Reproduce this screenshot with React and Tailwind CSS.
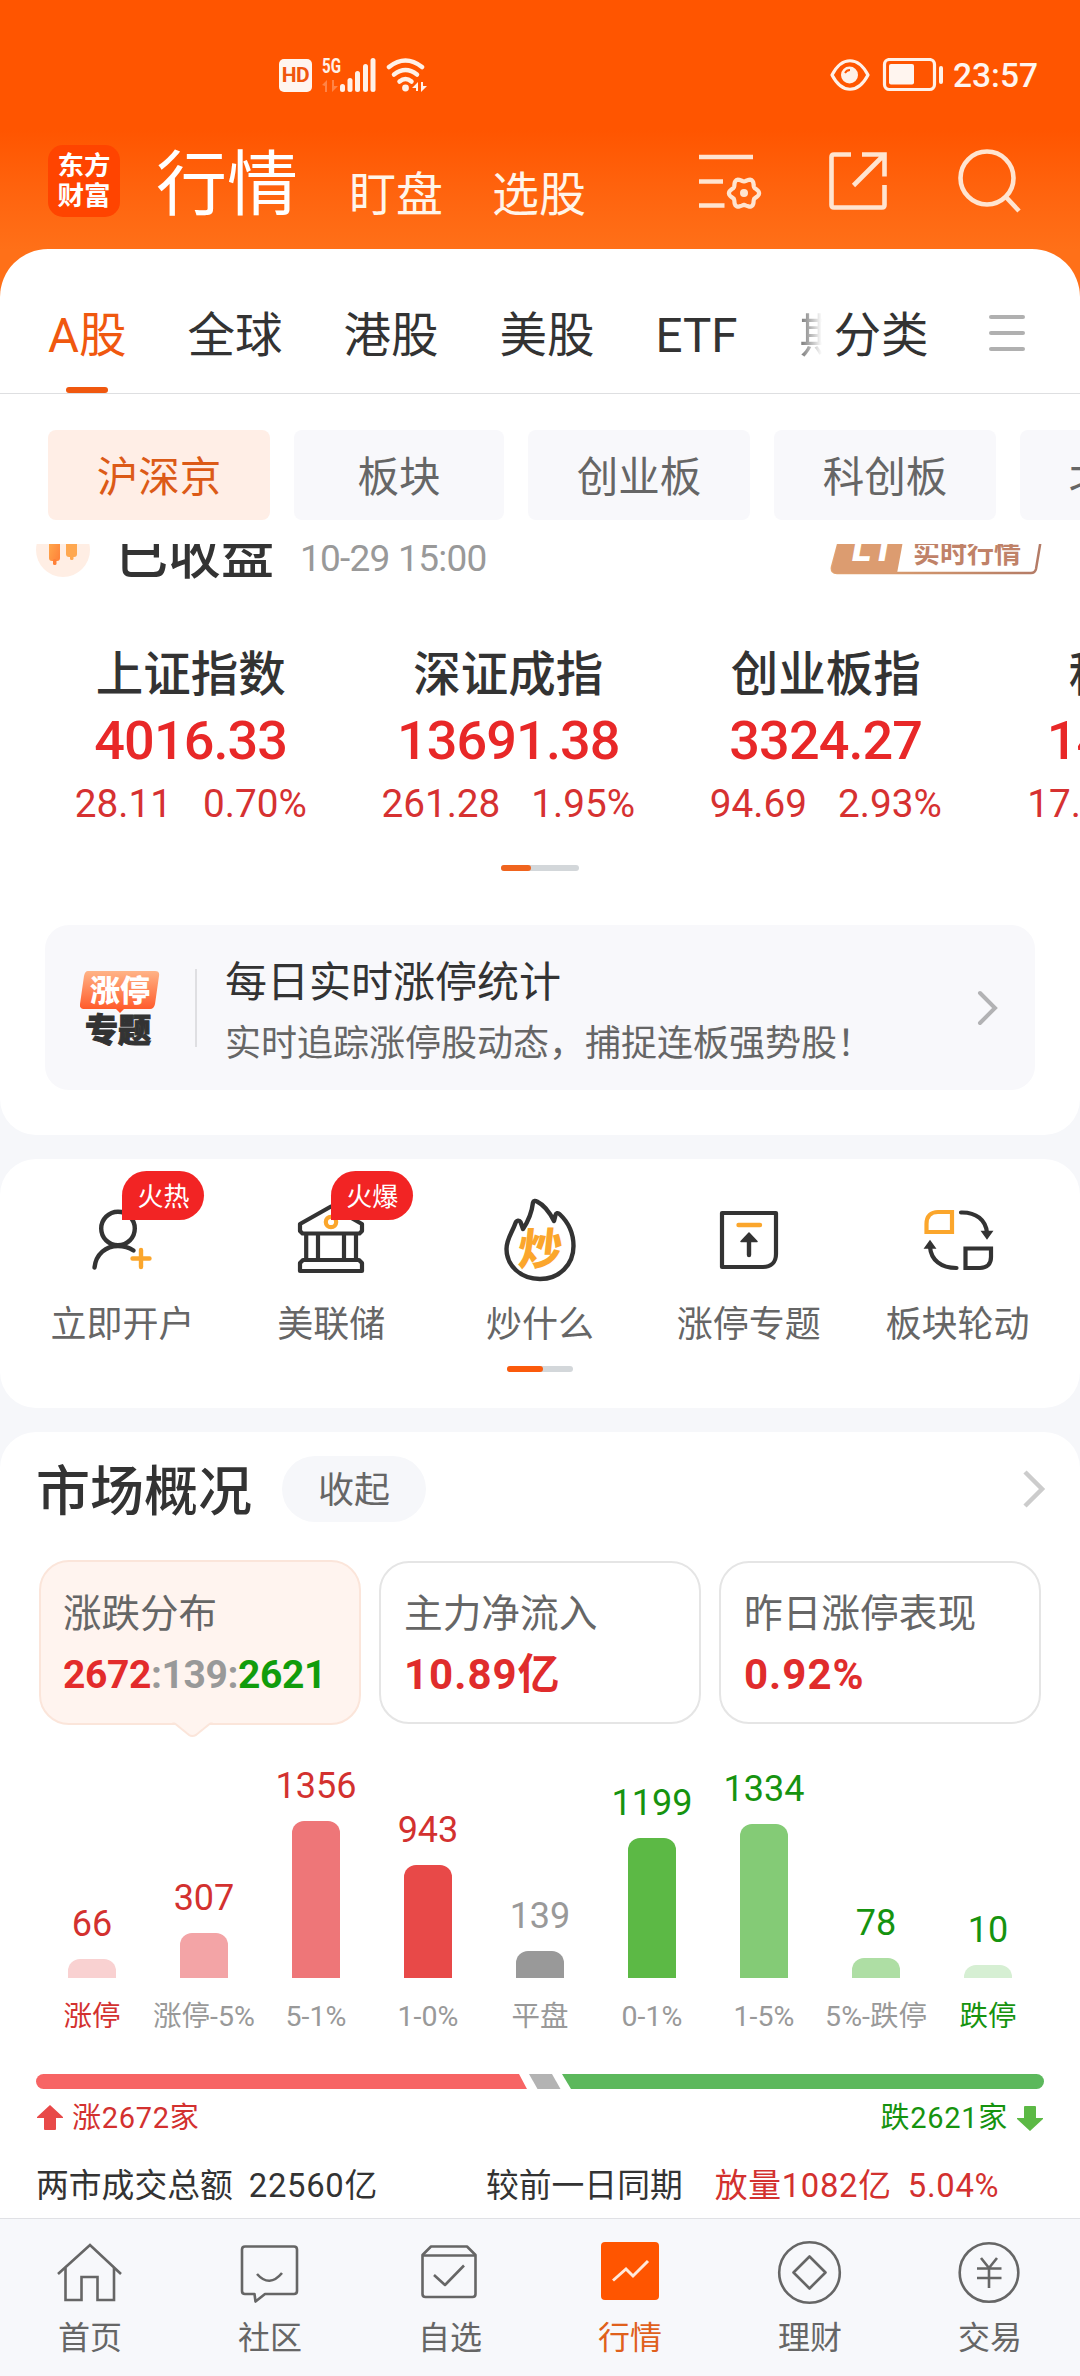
import clsx from 'clsx';

const quickLinks = [
    { name: '立即开户', badge: '火热', icon: UserPlusIcon },
    { name: '美联储', badge: '火爆', icon: BankIcon },
    { name: '炒什么', icon: FlameIcon },
    { name: '涨停专题', icon: LimitUpIcon },
    { name: '板块轮动', icon: RotateIcon },
];

const indices = [
    { name: '上证指数', value: '4016.33', change: '28.11', percent: '0.70%' },
    { name: '深证成指', value: '13691.38', change: '261.28', percent: '1.95%' },
    { name: '创业板指', value: '3324.27', change: '94.69', percent: '2.93%' },
    { name: '科创50', value: '1490.06', change: '17.85', percent: '1.22%' },
];

const bars = [
    { label: '涨停', value: 66, height: 19, bar: 'bg-[#f9d1d1]', text: 'text-[#d3312f]', labelText: 'text-[#d3312f]' },
    { label: '涨停-5%', value: 307, height: 45, bar: 'bg-[#f3a4a6]', text: 'text-[#d3312f]', labelText: 'text-[#999999]' },
    { label: '5-1%', value: 1356, height: 157, bar: 'bg-[#ee7678]', text: 'text-[#d3312f]', labelText: 'text-[#999999]' },
    { label: '1-0%', value: 943, height: 113, bar: 'bg-[#e84948]', text: 'text-[#d3312f]', labelText: 'text-[#999999]' },
    { label: '平盘', value: 139, height: 27, bar: 'bg-[#999999]', text: 'text-[#999999]', labelText: 'text-[#999999]' },
    { label: '0-1%', value: 1199, height: 140, bar: 'bg-[#5cb945]', text: 'text-[#16930f]', labelText: 'text-[#999999]' },
    { label: '1-5%', value: 1334, height: 154, bar: 'bg-[#84cb76]', text: 'text-[#16930f]', labelText: 'text-[#999999]' },
    { label: '5%-跌停', value: 78, height: 20, bar: 'bg-[#aedea4]', text: 'text-[#16930f]', labelText: 'text-[#999999]' },
    { label: '跌停', value: 10, height: 13, bar: 'bg-[#d6efd3]', text: 'text-[#16930f]', labelText: 'text-[#16930f]' },
];

const navItems = [
    { name: '首页', icon: HomeIcon },
    { name: '社区', icon: ChatIcon },
    { name: '自选', icon: BoxIcon },
    { name: '行情', icon: TrendIcon, active: true },
    { name: '理财', icon: DiamondIcon },
    { name: '交易', icon: YuanIcon },
];

// Six rounded teeth around (744, 193)
const gearPoints = Array.from({ length: 72 }, (_, i) => {
    const a = (i * Math.PI) / 36;
    const r = 13.4 + 1.7 * Math.cos(6 * a);
    return `${(744 + r * Math.cos(a)).toFixed(1)},${(193.2 + r * Math.sin(a)).toFixed(1)}`;
}).join(' ');

function UserPlusIcon() {
    return (
        <svg width="84" height="84" viewBox="80 1198 84 84" fill="none" strokeWidth="4.4" strokeLinecap="round">
            <circle cx="118" cy="1228.500" r="16.800" stroke="#333" />
            <path d="M94.500 1267.500C96 1254 106 1246 118 1246C124 1246 129 1247.500 133.500 1250.500" stroke="#333" />
            <path d="M132.500 1258.500H149.500M141 1250V1267" stroke="#fba62c" />
        </svg>
    );
}

function BankIcon() {
    return (
        <svg width="84" height="84" viewBox="289 1198 84 84" fill="none" stroke="#333" strokeWidth="4.2" strokeLinejoin="round">
            <path d="M300 1224L331 1206.500L362 1224V1231L359.500 1233.500H302.500L300 1231Z" />
            <path d="M306.200 1234V1259M318 1234V1259M344 1234V1259M356 1234V1259" />
            <path d="M300 1271V1263L303 1260H359L362 1263V1271Z" />
            <circle cx="331" cy="1222" r="5.200" stroke="#fba62c" />
        </svg>
    );
}

function FlameIcon() {
    return (
        <div className="relative h-[84px] w-[84px]">
            <svg width="84" height="84" viewBox="498 1198 84 84" fill="none" stroke="#333" strokeWidth="4.400" strokeLinejoin="round">
                <path d="M523 1229C529 1220 532 1211 533 1202.500C533.500 1200.500 535.500 1200.500 537 1201.500C544 1205 550 1213 554 1221L555.500 1215C556 1213 558 1212.500 559.500 1214C568 1222 573.500 1233 573.500 1246C573.500 1265 559 1279 540 1279C520 1279 506.500 1265 506.500 1249C506.500 1239 512 1233 515.500 1223C516.500 1220 519.500 1220 520.500 1222Z" />
            </svg>
            <span className="absolute top-[30px] left-[20px] -skew-x-6 text-[44px] leading-[44px] font-black text-[#fba62c]">炒</span>
        </div>
    );
}

function LimitUpIcon() {
    return (
        <svg width="84" height="84" viewBox="707 1198 84 84" fill="none" strokeLinejoin="round" strokeLinecap="round">
            <path d="M722 1213H776V1254C776 1262 771 1267 763 1267H722Z" stroke="#333" strokeWidth="4.200" />
            <path d="M738.500 1225H760" stroke="#fba62c" strokeWidth="4.400" />
            <path d="M749 1239V1255" stroke="#333" strokeWidth="4.400" />
            <path d="M749 1233L757 1241.500H741Z" fill="#333" stroke="#333" strokeWidth="1.500" />
        </svg>
    );
}

function RotateIcon() {
    return (
        <svg width="84" height="84" viewBox="916 1198 84 84" fill="none" stroke="#333" strokeWidth="4.200" strokeLinecap="round">
            <path d="M926.500 1232V1224C926.500 1216 931 1212 938 1212H952V1232Z" stroke="#fba62c" strokeLinecap="butt" />
            <path d="M961 1212.500C976 1212 986 1220 987 1233" />
            <path d="M982 1231.500H992L987 1238.500Z" fill="#333" strokeWidth="1.500" />
            <path d="M956.500 1268C941 1268 931 1260 930 1247" />
            <path d="M925 1248H935L930 1241Z" fill="#333" strokeWidth="1.500" />
            <path d="M965.500 1248.500H991V1257C991 1264 987 1268 980 1268H965.500Z" strokeLinecap="butt" />
        </svg>
    );
}

function HomeIcon() {
    return (
        <svg width="66" height="66" viewBox="57 2240 66 66" fill="none" stroke="#666" strokeWidth="2.600">
            <path d="M58 2275L90 2246L121 2275" />
            <path d="M65.500 2269V2301H81.500V2278H97.500V2301H114V2269" />
        </svg>
    );
}

function ChatIcon() {
    return (
        <svg width="66" height="66" viewBox="237 2240 66 66" fill="none" stroke="#666" strokeWidth="2.600" strokeLinejoin="round">
            <path d="M245 2247.500H294Q297 2247.500 297 2250.500V2292Q297 2295 294 2295H265L255.500 2302.500L254.500 2295H245Q242 2295 242 2292V2250.500Q242 2247.500 245 2247.500Z" />
            <path d="M257 2275Q269.500 2289 282 2274" />
        </svg>
    );
}

function BoxIcon() {
    return (
        <svg width="66" height="66" viewBox="417 2240 66 66" fill="none" stroke="#666" strokeWidth="2.600" strokeLinejoin="round">
            <path d="M422.500 2256L431 2247.500H467L475.500 2256V2295Q475.500 2298 472.500 2298H425.500Q422.500 2298 422.500 2295Z" />
            <path d="M423 2256.500H475" />
            <path d="M434 2276L445 2286L464 2266.500" />
        </svg>
    );
}

function TrendIcon() {
    return (
        <svg width="66" height="66" viewBox="597 2240 66 66" fill="none">
            <rect x="601" y="2243" width="58" height="58" rx="4" fill="#ff5500" />
            <path d="M613 2281.500L626 2270L633 2277L648 2262" stroke="#ffe9db" strokeWidth="3" />
        </svg>
    );
}

function DiamondIcon() {
    return (
        <svg width="66" height="66" viewBox="777 2240 66 66" fill="none" stroke="#666" strokeWidth="2.600" strokeLinejoin="round">
            <circle cx="809.500" cy="2273.500" r="30.300" />
            <path d="M809.500 2257.500L825.500 2273.500L809.500 2289.500L793.500 2273.500Z" />
        </svg>
    );
}

function YuanIcon() {
    return (
        <svg width="66" height="66" viewBox="957 2240 66 66" fill="none" stroke="#666" strokeWidth="2.600">
            <circle cx="989" cy="2273.500" r="29.300" />
            <path d="M981 2259L989 2269L997 2259M977 2269.500H1001.500M977 2279H1001.500M989 2269V2289" />
        </svg>
    );
}

function StatusBar() {
    return (
        <div className="flex h-[104px] items-end justify-between pr-[42px] pl-[279px]">
            <div className="flex h-[46px] items-start gap-2.5 text-white/95">
                <div className="mt-px flex h-[33px] w-[33px] items-center justify-center rounded-[5px] bg-[#fff5ef] text-[21px] font-bold tracking-tight text-[#f0560e]">HD</div>
                <svg width="54" height="34" viewBox="323 58 54 34" fill="#fff1e8">
                    <text x="323" y="73" fontSize="20" fontWeight="700" textLength="19" lengthAdjust="spacingAndGlyphs">5G</text>
                    <path d="M323 85L328 80V92H326V86ZM339 86L333 92V80H335V86Z" opacity=".3" />
                    <rect x="341" y="84" width="5" height="8" rx="2.500" />
                    <rect x="348.500" y="78" width="5" height="14" rx="2.500" />
                    <rect x="356" y="71" width="5" height="21" rx="2.500" />
                    <rect x="364" y="64" width="5" height="28" rx="2.500" />
                    <rect x="371.500" y="58" width="5" height="34" rx="2.500" />
                </svg>
                <svg width="42" height="34" viewBox="386 58 42 34" fill="none" stroke="#fff1e8" strokeWidth="4.500" strokeLinecap="round">
                    <path d="M389 67Q405.500 54 422 67" />
                    <path d="M394 74.500Q405.500 65.500 417 74.500" />
                    <path d="M399.500 81.500Q405.500 76.500 411.500 81.500" />
                    <circle cx="405.500" cy="88" r="3.400" fill="#fff1e8" stroke="none" />
                    <path d="M412 88L418 82V91H416V88ZM427 86L421 92V82H423V86Z" fill="#fff1e8" stroke="none" />
                </svg>
            </div>
            <div className="flex h-[46px] items-start">
                <svg width="114" height="34" viewBox="830 59 114 34" fill="none" stroke="#fff1e8" strokeWidth="3.200">
                    <path d="M832 76C842 57 858 57 868 76C858 95 842 95 832 76Z" strokeLinejoin="round" />
                    <circle cx="849.500" cy="76" r="8.500" fill="#fff1e8" stroke="none" />
                    <path d="M845 74Q846.500 71 850 71" stroke="#ff5500" strokeWidth="1.800" />
                    <rect x="884.500" y="60.500" width="50" height="30" rx="5" />
                    <rect x="889" y="65" width="25" height="20.500" rx="2" fill="#fff5ef" stroke="none" />
                    <path d="M941 69V83" strokeWidth="4" strokeLinecap="round" />
                </svg>
                <span className="mt-px ml-[9px] text-[33.500px] leading-[34px] font-medium text-[#fff5ef]">23:57</span>
            </div>
        </div>
    );
}

function Header() {
    return (
        <div className="flex h-[196px] items-start pt-[41px] pl-12">
            <div className="flex h-[72px] w-[72px] flex-col items-center justify-center rounded-[15px] bg-[#ff4400] text-[26.500px] leading-[30px] font-bold text-white">
                <span>东方</span>
                <span>财富</span>
            </div>
            <span className="mt-0.5 ml-[36px] text-[71px] leading-[76px] text-white">行情</span>
            <span className="mt-4 ml-[51px] text-[47px] leading-[68px] text-[#fff5ea]">盯盘</span>
            <span className="mt-4 ml-[49px] text-[47px] leading-[68px] text-[#fff5ea]">选股</span>
            <svg className="mt-[3px] ml-auto mr-[58px]" width="330" height="66" viewBox="692 148 330 66" fill="none" stroke="#ffe4d0" strokeWidth="4.600">
                <path d="M699 157H753M699 181.500H723M699 205.500H724.500" />
                <polygon points={gearPoints} strokeLinejoin="round" strokeWidth="4.200" />
                <circle cx="744" cy="193" r="4" fill="#ffe4d0" stroke="none" />
                <path d="M851 154.500H834Q831.500 154.500 831.500 157V205Q831.500 207.500 834 207.500H882Q884.500 207.500 884.500 205V185M862 154.500H884.500V176.500M884 155L853.500 185.500" />
                <circle cx="987" cy="178" r="26.500" />
                <path d="M1005 196L1019 211" />
            </svg>
        </div>
    );
}

function MarketTabs() {
    const cell = 'text-[47.500px] leading-[60px] text-[#333]';
    return (
        <div className="flex h-[145px] items-start border-b border-[#dedfe1] pt-[57px] pl-12">
            <div className="flex flex-col items-center">
                <span className="text-[47.500px] leading-[60px] text-[#f0580f]">A股</span>
                <span className="mt-[21px] h-1.5 w-[42px] rounded-full bg-[#f0580f]" />
            </div>
            <span className={clsx(cell, 'ml-[61px]')}>全球</span>
            <span className={clsx(cell, 'ml-[61px]')}>港股</span>
            <span className={clsx(cell, 'ml-[61px]')}>美股</span>
            <span className={clsx(cell, 'ml-[61px]')}>ETF</span>
            <span className="ml-[62px] w-[22px] overflow-hidden bg-gradient-to-r from-[#777] to-white bg-clip-text text-[47px] leading-[60px] whitespace-nowrap text-transparent">期</span>
            <span className={clsx(cell, 'ml-[12px]')}>分类</span>
            <div className="mt-[9px] ml-[60px] flex flex-col gap-3">
                <span className="h-1 w-9 rounded-full bg-[#b0b0b0]" />
                <span className="h-1 w-9 rounded-full bg-[#b0b0b0]" />
                <span className="h-1 w-9 rounded-full bg-[#b0b0b0]" />
            </div>
        </div>
    );
}

function BoardChips() {
    const chip = 'flex h-[90px] shrink-0 items-center justify-center rounded-lg pt-[7px] text-[41.500px]';
    return (
        <div className="flex h-[150px] gap-6 overflow-hidden pt-9 pl-12">
            <div className={clsx(chip, 'w-[222px] bg-[#ffeee6] text-[#dc5a17]')}>沪深京</div>
            <div className={clsx(chip, 'w-[210px] bg-[#f8f8fb] text-[#666]')}>板块</div>
            <div className={clsx(chip, 'w-[222px] bg-[#f8f8fb] text-[#666]')}>创业板</div>
            <div className={clsx(chip, 'w-[222px] bg-[#f8f8fb] text-[#666]')}>科创板</div>
            <div className={clsx(chip, 'w-[222px] bg-[#f8f8fb] text-[#666]')}>北交所</div>
        </div>
    );
}

/* Scrolled under the chips, so only the lower half of the row shows */
function SessionRow() {
    return (
        <div className="flex h-[40px] items-end overflow-hidden pr-[38px] pl-9">
            <svg className="mb-[7px] shrink-0" width="54" height="54" viewBox="0 0 54 54">
                <defs>
                    <linearGradient id="candle" x1="0" y1="0" x2="1" y2="1">
                        <stop offset="0" stopColor="#ffb050" />
                        <stop offset="1" stopColor="#ff8038" />
                    </linearGradient>
                </defs>
                <circle cx="27" cy="27" r="27" fill="#ffeee4" />
                <rect x="13" y="10" width="11" height="28" rx="3" fill="url(#candle)" />
                <rect x="17" y="36" width="3.500" height="6" rx="1.500" fill="#ff8038" />
                <rect x="30" y="10" width="11" height="24" rx="3" fill="#ffa850" />
                <rect x="34" y="32" width="3.500" height="5" rx="1.500" fill="#ffa850" />
            </svg>
            <span className="-mb-0.5 ml-[25px] text-[53px] leading-[60px] font-medium text-[#333]">已收盘</span>
            <span className="mb-0.5 ml-[26px] text-[37px] leading-[46px] tracking-[-0.750px] text-[#999]">10-29 15:00</span>
            <svg className="mb-[9px] ml-auto shrink-0" width="212" height="62" viewBox="830 513 212 62">
                <defs>
                    <linearGradient id="level" x1="0" y1="0" x2="1" y2="0">
                        <stop offset="0" stopColor="#e5a670" />
                        <stop offset="1" stopColor="#b27a66" />
                    </linearGradient>
                </defs>
                <path d="M846 515H1045L1036 569Q1035 573 1031 573H837Q831 573 832 567Z" fill="none" stroke="url(#level)" strokeWidth="2.500" />
                <path d="M845 514H908L897 573.500H837Q831 573.500 832 567Z" fill="#dc9c70" />
                <text x="850" y="561" fontSize="36" fontWeight="900" fill="#fff" transform="skewX(-10)" style={{ transformOrigin: '850px 562px' }}>L1</text>
                <text x="913" y="563" fontSize="27" fontWeight="700" fill="#c08268">实时行情</text>
            </svg>
        </div>
    );
}

function IndexList() {
    return (
        <div className="flex h-[278px] overflow-hidden pt-[61px] pl-8">
            {indices.map((item) => (
                <div key={item.name} className="flex w-[317.500px] shrink-0 flex-col items-center">
                    <span className="text-[47.500px] leading-[60px] font-medium text-[#333]">{item.name}</span>
                    <span className="mt-1.5 text-[54px] leading-[60px] font-medium tracking-[-0.900px] text-[#e82828]">{item.value}</span>
                    <div className="mt-2.5 flex gap-[31px] text-[38.700px] leading-[46px] text-[#d63131]">
                        <span>{item.change}</span>
                        <span>{item.percent}</span>
                    </div>
                </div>
            ))}
        </div>
    );
}

function TopicCard() {
    return (
        <div className="mx-[45px] flex h-[165px] items-center rounded-[24px] bg-[#f8f8fb] pl-[35px]">
            <svg width="80" height="76" viewBox="80 970 80 76">
                <defs>
                    <linearGradient id="topic" x1="0" y1="0" x2="0" y2="1">
                        <stop offset="0" stopColor="#ffb487" />
                        <stop offset="1" stopColor="#ff5222" />
                    </linearGradient>
                </defs>
                <path d="M88 971H155Q160 971 159 976L155 1004Q154 1009 150 1009H124L120 1013L116 1009H85Q79 1009 80 1004L84 976Q85 971 88 971Z" fill="url(#topic)" />
                <text x="90" y="1001" fontSize="30" fontWeight="900" fill="#fff">涨停</text>
                <text x="85" y="1042" fontSize="33" fontWeight="900" fill="#333" stroke="#333" strokeWidth="1">专题</text>
            </svg>
            <span className="ml-[35px] h-[78px] w-0.5 bg-[#dfdfe2]" />
            <div className="mt-[11px] ml-[28px] flex flex-col">
                <span className="text-[42px] leading-[56px] text-[#333]">每日实时涨停统计</span>
                <span className="mt-[5px] text-[36px] leading-[56px] text-[#666]">实时追踪涨停股动态，捕捉连板强势股！</span>
            </div>
            <svg className="mr-[36px] ml-auto" width="22" height="36" viewBox="0 0 22 36" fill="none" stroke="#b2b2b4" strokeWidth="4" strokeLinecap="round">
                <path d="M3 3L18 18L3 33" />
            </svg>
        </div>
    );
}

function QuickLinks() {
    return (
        <div className="h-[249px] rounded-[36px] bg-white px-[18px] pt-[39px]">
            <div className="flex">
                {quickLinks.map((item) => (
                    <div key={item.name} className="relative flex flex-1 flex-col items-center">
                        <item.icon />
                        {item.badge && (
                            <span className="absolute -top-[27px] left-1/2 flex h-[49px] w-[82px] items-center justify-center rounded-full rounded-bl-none bg-[#f22424] pt-[3px] text-[26px] text-white">{item.badge}</span>
                        )}
                        <span className="mt-[19px] text-[36px] leading-[48px] text-[#666]">{item.name}</span>
                    </div>
                ))}
            </div>
            <div className="mx-auto mt-[17px] h-1.5 w-[66px] rounded-full bg-[#d3d7da]">
                <div className="h-1.5 w-9 rounded-full bg-[#fb5a0c]" />
            </div>
        </div>
    );
}

function OverviewCards() {
    return (
        <div className="mt-[39px] flex gap-[18px] pl-[39px]">
            <div className="relative -mt-px flex h-[165px] w-[322px] flex-col rounded-[30px] border-2 border-[#fbe5da] bg-[#fff4ef] pt-[26px] pl-[22px]">
                <span className="text-[38.500px] leading-[52px] text-[#666]">涨跌分布</span>
                <div className="mt-3 text-[39px] leading-[46px] font-bold tracking-[-0.400px] text-[#999]">
                    <span className="text-[#e32b2b]">2672</span>:139:<span className="text-[#119c0c]">2621</span>
                </div>
                <svg className="absolute -bottom-[15px] left-[131px]" width="42" height="17" viewBox="0 0 42 17">
                    <path d="M1 1L17 14Q20 16 24 14L40 1" fill="#fff4ef" stroke="#fbe5da" strokeWidth="2" />
                    <path d="M1 0H40V1.500H1Z" fill="#fff4ef" />
                </svg>
            </div>
            <div className="flex h-[163px] w-[322px] flex-col rounded-[30px] border-2 border-[#e5e5e5] pt-[25px] pl-[23px]">
                <span className="text-[38.700px] leading-[52px] text-[#666]">主力净流入</span>
                <span className="mt-3 text-[42px] leading-[46px] font-bold tracking-[1px] text-[#e02c2c]">10.89亿</span>
            </div>
            <div className="flex h-[163px] w-[322px] flex-col rounded-[30px] border-2 border-[#e5e5e5] pt-[25px] pl-[23px]">
                <span className="text-[38.700px] leading-[52px] text-[#666]">昨日涨停表现</span>
                <span className="mt-3 text-[42px] leading-[46px] font-bold tracking-[1px] text-[#e02c2c]">0.92%</span>
            </div>
        </div>
    );
}

function DistributionChart() {
    return (
        <div className="px-9">
            <div className="flex h-[253px] items-end">
                {bars.map((item) => (
                    <div key={item.label} className="flex w-[112px] flex-col items-center">
                        <span className={clsx('mb-[14px] text-[36px] leading-[42px]', item.text)}>{item.value}</span>
                        <div className={clsx('w-12 rounded-t-[12px]', item.bar)} style={{ height: item.height }} />
                    </div>
                ))}
            </div>
            <div className="mt-[19px] flex">
                {bars.map((item) => (
                    <span key={item.label} className={clsx('w-[112px] text-center text-[28.500px] leading-[40px] whitespace-nowrap', item.labelText)}>{item.label}</span>
                ))}
            </div>
        </div>
    );
}

function RiseFallBar() {
    return (
        <div className="mt-[37px] px-9">
            <svg className="block" width="1008" height="15" viewBox="36 0 1008 15">
                <path d="M43.500 0H519L527 15H43.500A7.500 7.500 0 0 1 43.500 0Z" fill="#f76464" />
                <path d="M529 0H552L560.500 15H537.500Z" fill="#b3b3b3" />
                <path d="M562 0H1036.500A7.500 7.500 0 0 1 1036.500 15H571Z" fill="#5cb85c" />
            </svg>
            <div className="mt-[9px] flex h-10 items-center text-[29px] leading-[40px]">
                <svg width="28" height="28" viewBox="0 0 28 28" fill="#e84948">
                    <path d="M14 1L27 13V14H20V25Q20 26 19 26H9Q8 26 8 25V14H1V13Z" />
                </svg>
                <span className="ml-2 tracking-[0.700px] text-[#d3312f]">涨2672家</span>
                <span className="mr-2 ml-auto tracking-[0.700px] text-[#16930f]">跌2621家</span>
                <svg width="28" height="28" viewBox="0 0 28 28" fill="#5cb945">
                    <path d="M14 27L27 15V14H20V3Q20 2 19 2H9Q8 2 8 3V14H1V15Z" />
                </svg>
            </div>
        </div>
    );
}

function MarketOverview() {
    return (
        <div className="mt-6 h-[786px] overflow-hidden rounded-t-[36px] bg-white pt-6">
            <div className="flex h-[66px] items-center pr-[33px] pl-9">
                <span className="mt-2 text-[54px] leading-[66px] font-medium text-[#333]">市场概况</span>
                <span className="ml-[30px] flex h-[66px] w-[144px] items-center justify-center rounded-full bg-[#f6f7fa] pt-1 text-[36px] text-[#666]">收起</span>
                <svg className="ml-auto" width="25" height="40" viewBox="0 0 25 40" fill="none" stroke="#ccc" strokeWidth="4.500">
                    <path d="M3 3L20 20L3 37" />
                </svg>
            </div>
            <OverviewCards />
            <DistributionChart />
            <RiseFallBar />
            <div className="mt-6 flex pl-9 text-[32.800px] leading-[48px] text-[#333]">
                <span>两市成交总额</span>
                <span className="ml-4 tracking-[0.700px]">22560亿</span>
                <span className="ml-[108px]">较前一日同期</span>
                <span className="ml-8 tracking-[0.700px] text-[#d3312f]">放量1082亿</span>
                <span className="ml-4 tracking-[0.700px] text-[#d3312f]">5.04%</span>
            </div>
        </div>
    );
}

function BottomNav() {
    return (
        <div className="flex h-[158px] border-t border-[#e0e1e5] bg-[#f7f8fb] pt-[20px]">
            {navItems.map((item) => (
                <div key={item.name} className="flex flex-1 flex-col items-center">
                    <item.icon />
                    <span className={clsx('mt-[11px] text-[32px] leading-[44px]', item.active ? 'text-[#e0601c]' : 'text-[#666]')}>{item.name}</span>
                </div>
            ))}
        </div>
    );
}

function App() {
    return (
        <div className="h-[2376px] w-[1080px] overflow-hidden bg-[#f6f7fa] font-['Roboto','Noto_Sans_CJK_SC',sans-serif]">
            <div className="bg-linear-to-b from-[#ff5500] from-[130px] to-[#ff7018] to-[250px]">
                <StatusBar />
                <Header />
            </div>
            <div className="relative -mt-[51px] h-[886px] rounded-t-[48px] rounded-b-[36px] bg-white">
                <MarketTabs />
                <BoardChips />
                <SessionRow />
                <IndexList />
                <div className="mx-auto mt-[3px] mb-[54px] h-1.5 w-[78px] rounded-full bg-[#d3d7da]">
                    <div className="h-1.5 w-[30px] rounded-full bg-[#f0641e]" />
                </div>
                <TopicCard />
            </div>
            <div className="h-6" />
            <QuickLinks />
            <MarketOverview />
            <BottomNav />
        </div>
    );
}

export default App;
